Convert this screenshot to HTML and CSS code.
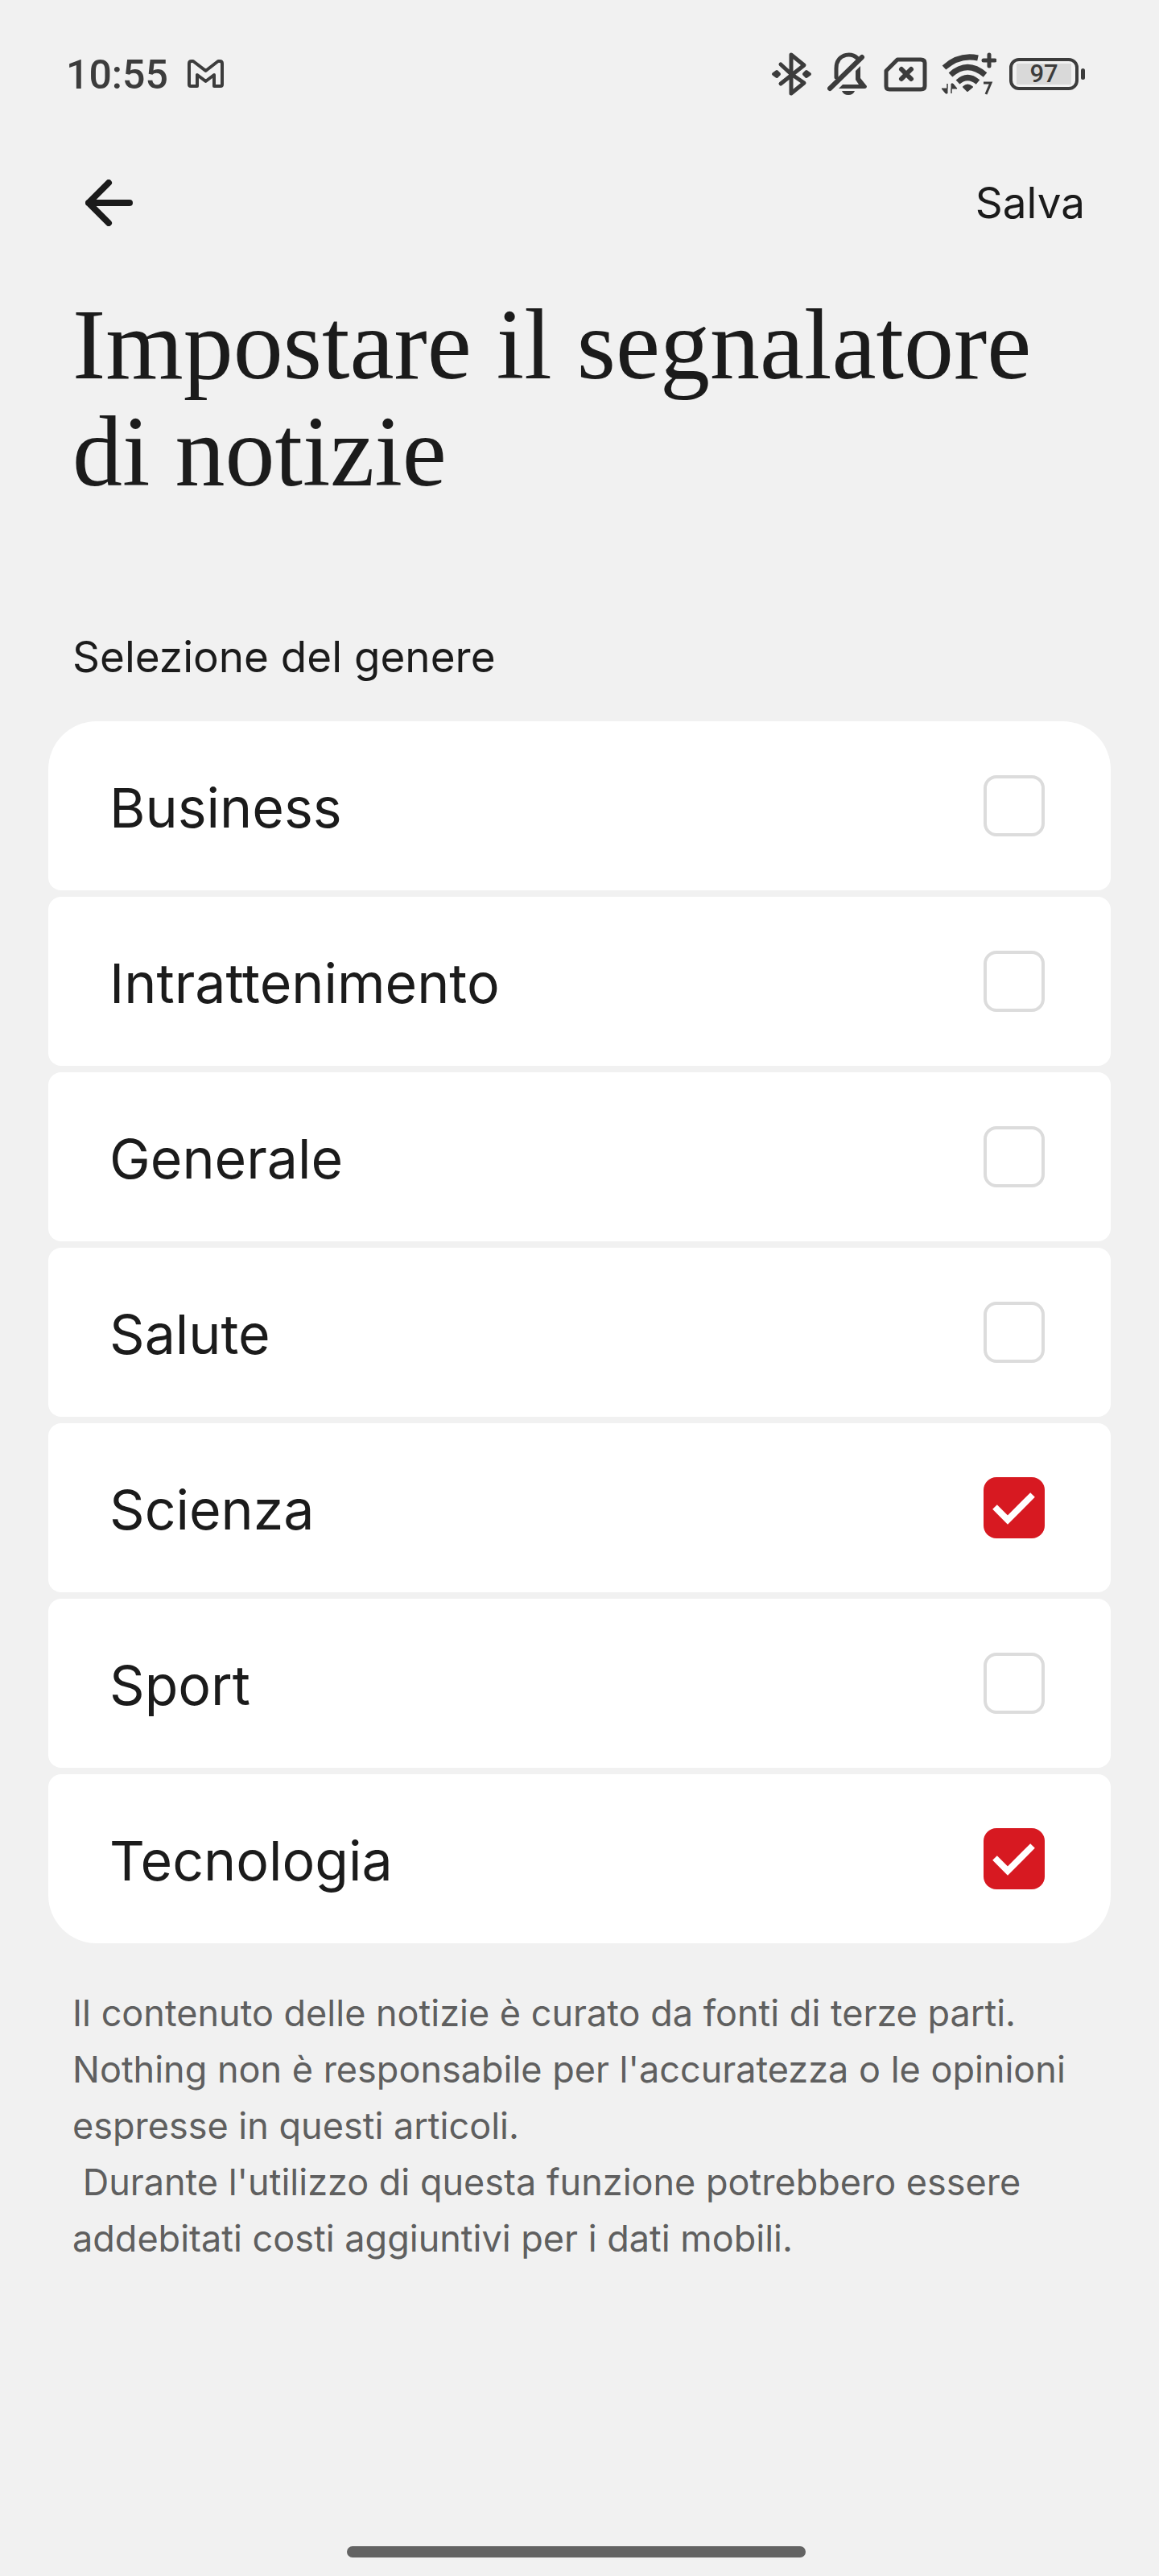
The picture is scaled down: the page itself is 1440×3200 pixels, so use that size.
FILE: index.html
```html
<!DOCTYPE html>
<html lang="it">
<head>
<meta charset="utf-8">
<meta name="viewport" content="width=device-width, initial-scale=1">
<title>Impostare il segnalatore di notizie</title>
<link rel="stylesheet" href="styles.css">
</head>
<body>
<div class="screen">
  <div class="status">
    <div class="status-group status-left">
      <span class="clock">10:55</span>
      <svg class="icon" width="46" height="36" viewBox="0 0 46 36" fill="none" stroke="#3c3c3c" stroke-width="4" stroke-linejoin="round" aria-hidden="true"><path d="M2 5Q2 2 5 2L7 2L22.500 14L38 2L40 2Q43 2 43 5V31Q43 33 41 33H33V19L22.500 27L12 19V33H4Q2 33 2 31Z"/></svg>
    </div>
    <div class="status-group status-right">
      <svg class="icon" width="54" height="54" viewBox="0 0 54 54" fill="none" stroke="#3c3c3c" stroke-width="5" stroke-linecap="round" stroke-linejoin="round" aria-hidden="true"><path d="M12 15L25 27V3L41 16L12 39M25 27V51L41 38L25 27"/><g fill="#3c3c3c" stroke-width="4"><path d="M7 24L10 27L7 30L3 27ZM44 24L48 27L44 30L41 27Z"/></g></svg>
      <svg class="icon" width="54" height="54" viewBox="0 0 54 54" fill="none" stroke="#3c3c3c" stroke-width="6" stroke-linecap="round" aria-hidden="true"><path d="M11 31V20C11 0 34 -1 39 10" stroke-width="5"/><path d="M3 45L43 6"/><path d="M14 45L19 40H39L35 34V23L41 17V32L49 42Q49 45 46 45Z" fill="#3c3c3c" stroke="none"/><path d="M18 48H34Q32 53 26 53Q20 53 18 48Z" fill="#3c3c3c" stroke="none"/></svg>
      <svg class="icon" width="56" height="54" viewBox="0 0 56 54" fill="none" stroke="#3c3c3c" stroke-width="5" stroke-linecap="round" stroke-linejoin="round" aria-hidden="true"><path d="M17 9H46Q51 9 51 13V42Q51 46 46 46H7Q3 46 3 42V23Z"/><path d="M22 21L34 33M34 21L22 33" stroke-width="6"/></svg>
      <svg class="icon" width="68" height="56" viewBox="0 0 68 56" fill="none" stroke="#3c3c3c" aria-hidden="true"><g stroke-width="7"><path d="M3 20Q22 3 45 8"/><path d="M11 29Q32 10 54 29"/><path d="M20 38Q32 27 45 38"/></g><path d="M27 44Q32 39 38 44L32 49Z" fill="#3c3c3c" stroke-width="2" stroke-linejoin="round"/><path d="M59 4V18M52 11H66" stroke-width="5" stroke-linecap="round"/><path d="M7 40V52H5L0 46H7ZM12 52V40H14L19 46H12Z" fill="#3c3c3c" stroke-width="1"/><path d="M52 39H61L55 53" stroke-width="3"/></svg>
      <div class="battery"><div class="battery-body"><span class="battery-level">97</span></div><div class="battery-tip"></div></div>
    </div>
  </div>

  <header class="toolbar">
    <button class="back" type="button" aria-label="Indietro">
      <svg class="icon" width="60" height="58" viewBox="0 0 60 58" fill="none" stroke="#1b1b1b" stroke-width="8" stroke-linecap="round" stroke-linejoin="round" aria-hidden="true"><path d="M29 4L4 29L29 54M4 29H55"/></svg>
    </button>
    <button class="save" type="button">Salva</button>
  </header>

  <main class="content">
    <h1 class="title">Impostare il segnalatore di notizie</h1>
    <h2 class="section">Selezione del genere</h2>
    <div class="list">
      <label class="row"><span>Business</span><input class="check" type="checkbox"></label>
      <label class="row"><span>Intrattenimento</span><input class="check" type="checkbox"></label>
      <label class="row"><span>Generale</span><input class="check" type="checkbox"></label>
      <label class="row"><span>Salute</span><input class="check" type="checkbox"></label>
      <label class="row"><span>Scienza</span><input class="check" type="checkbox" checked></label>
      <label class="row"><span>Sport</span><input class="check" type="checkbox"></label>
      <label class="row"><span>Tecnologia</span><input class="check" type="checkbox" checked></label>
    </div>
    <p class="note">Il contenuto delle notizie è curato da fonti di terze parti. Nothing non è responsabile per l'accuratezza o le opinioni espresse in questi articoli.<br>&nbsp;Durante l'utilizzo di questa funzione potrebbero essere addebitati costi aggiuntivi per i dati mobili.</p>
  </main>
  <div class="home-bar"></div>
</div>
</body>
</html>
```
FILE: styles.css
```css
* { box-sizing: border-box; }

body {
  margin: 0;
  background: #f1f1f1;
  color: #1b1b1b;
  font-family: Inter, "Liberation Sans", sans-serif;
  font-weight: 400;
}

.screen {
  display: flex;
  flex-direction: column;
  min-height: 100vh;
}

.icon { display: block; flex: none; }

.status {
  display: flex;
  align-items: center;
  justify-content: space-between;
  height: 184px;
  padding: 0 92px 0 82px;
  color: #3c3c3c;
}

.status-group { display: flex; align-items: center; }
.status-left { gap: 24px; }
.status-right { gap: 16px; }

.clock {
  padding-top: 2px;
  font: 500 50px/60px Roboto, sans-serif;
}

.battery { display: flex; align-items: center; gap: 3px; }

.battery-body {
  width: 86px;
  height: 40px;
  padding: 3px 5px;
  border: 4px solid #3c3c3c;
  border-radius: 12px;
}

.battery-level {
  display: block;
  background: #d9d9d9;
  font: 500 31px/26px Roboto, sans-serif;
  text-align: center;
}

.battery-tip {
  width: 5px;
  height: 14px;
  border-radius: 3px;
  background: #3c3c3c;
}

.toolbar {
  display: flex;
  align-items: center;
  justify-content: space-between;
  height: 136px;
  padding: 0 92px 0 106px;
}

.back, .save {
  padding: 0;
  border: 0;
  background: none;
  color: inherit;
}

.save {
  font-family: inherit;
  font-size: 53px;
  font-weight: inherit;
  line-height: 64px;
}

.content {
  flex: 1;
  padding: 42px 60px 0;
}

.title {
  margin: 0;
  padding: 0 30px;
  font: 400 124px/133px "Liberation Serif", serif;
}

.section {
  margin: 0;
  padding: 156px 30px 48px;
  font-size: 53px;
  font-weight: inherit;
  line-height: 64px;
}

.list {
  display: grid;
  gap: 8px;
}

.row {
  display: flex;
  align-items: center;
  justify-content: space-between;
  height: 210px;
  padding: 0 82px 0 76px;
  border-radius: 16px;
  background: #fff;
  font-size: 68px;
  line-height: 84px;
}

.row span { padding-top: 4px; }

.row:first-child { border-radius: 60px 60px 16px 16px; }
.row:last-child { border-radius: 16px 16px 60px 60px; }

.check {
  appearance: none;
  flex: none;
  width: 76px;
  height: 76px;
  margin: 0;
  border: 4px solid #dcdcdc;
  border-radius: 16px;
}

.check:checked {
  border: 0;
  background: #d71921 url("data:image/svg+xml,%3Csvg xmlns='http://www.w3.org/2000/svg' viewBox='0 0 76 76'%3E%3Cpath d='M14 37L30 53L61 22' fill='none' stroke='white' stroke-width='8'/%3E%3C/svg%3E") center / 100% no-repeat;
}

.note {
  margin: 0;
  padding: 52px 30px 0;
  color: #5f5f5f;
  font-size: 45px;
  line-height: 70px;
}

.home-bar {
  align-self: center;
  width: 570px;
  max-width: 40%;
  height: 14px;
  margin: 0 8px 23px 0;
  border-radius: 7px;
  background: #636363;
}
```
